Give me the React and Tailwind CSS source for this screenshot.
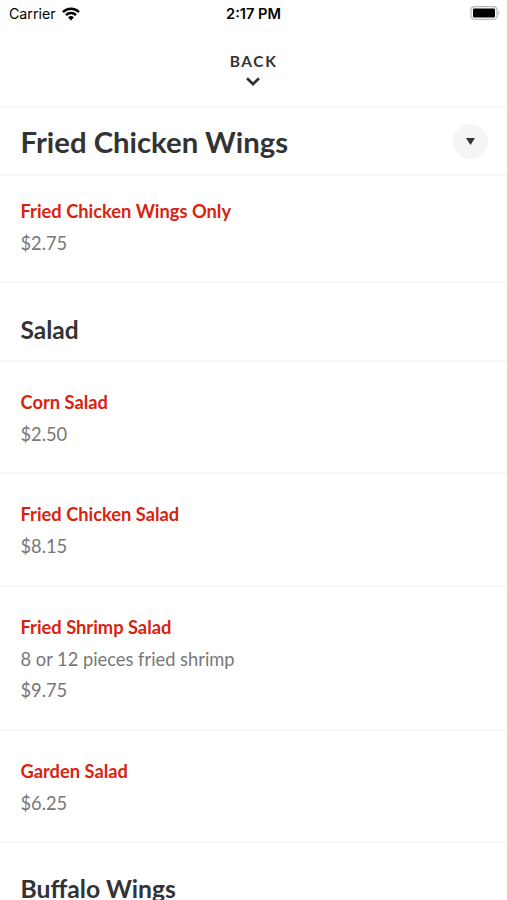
const salads = [
  { name: 'Corn Salad', price: '$2.50', height: 'h-[112px]' },
  { name: 'Fried Chicken Salad', price: '$8.15', height: 'h-[113px]' },
  { name: 'Fried Shrimp Salad', description: '8 or 12 pieces fried shrimp', price: '$9.75', height: 'h-[144px]' },
  { name: 'Garden Salad', price: '$6.25', height: 'h-[112px]' },
];

function StatusBar() {
  return (
    <div className="grid h-7 grid-cols-3 items-center pl-[9px] pr-[7px] font-['Inter','Liberation_Sans',sans-serif] text-black">
      <div className="flex items-center gap-[6px]">
        <span className="text-[14.2px] leading-7">Carrier</span>
        <svg width="18" height="14" viewBox="0 0 18 14" fill="none" stroke="currentColor" strokeWidth="2.5">
          <path d="M1 5.1a11.4 11.4 0 0 1 16 0" />
          <path d="M4 8.1a7.1 7.1 0 0 1 10 0" />
          <path d="M9 13.4 6.1 10.5a4.1 4.1 0 0 1 5.8 0Z" fill="currentColor" stroke="none" />
        </svg>
      </div>
      <span className="-ml-[2px] text-center text-[14.6px] leading-7 font-semibold">2:17 PM</span>
      <svg className="mb-[2px] justify-self-end" width="30" height="14" viewBox="0 0 30 14">
        <rect x="1" y="0.7" width="26" height="12.6" rx="3.5" fill="none" stroke="#b8b8b8" strokeWidth="1.2" />
        <rect x="3" y="2.6" width="22" height="8.8" rx="1.2" fill="black" />
        <path d="M28.3 4.8v4.4c1.6-.6 1.6-3.8 0-4.4Z" fill="#b8b8b8" />
      </svg>
    </div>
  );
}

function MenuItem({ item }) {
  return (
    <li className={`${item.height} border-b-2 border-[#f7f7f7] px-[20.5px] pt-[25px] text-[18.3px] leading-[31.6px]`}>
      <h3 className="font-bold text-[#d8230f]">{item.name}</h3>
      {item.description && <p className="text-[#777]">{item.description}</p>}
      <p className="text-[#777]">{item.price}</p>
    </li>
  );
}

export default function App() {
  return (
    <div className="h-[900px] w-full overflow-hidden bg-white font-['Lato',sans-serif] text-[#333]">
      <StatusBar />

      <header className="flex h-20 flex-col items-center border-b-2 border-[#f7f7f7] pt-[23px]">
        <button className="mr-[2px] flex flex-col items-center">
          <span className="pl-[2px] text-[15.5px] leading-5 font-bold tracking-[1.6px]">BACK</span>
          <svg className="mt-[6px]" width="14" height="9" viewBox="0 0 14 9" fill="none" stroke="currentColor" strokeWidth="2.7">
            <path d="m1 1.2 6 5.8 6-5.8" />
          </svg>
        </button>
      </header>

      <div className="flex h-[68px] items-center justify-between border-b-2 border-[#f7f7f7] pr-[19px] pl-[20.5px]">
        <h1 className="pt-[2px] text-[29.3px] leading-9 font-bold">Fried Chicken Wings</h1>
        <button className="flex size-[35px] items-center justify-center rounded-full bg-[#f5f5f5]" aria-label="Sections">
          <svg width="9" height="7" viewBox="0 0 9 7" fill="currentColor">
            <path d="M0 0h9L4.5 7Z" />
          </svg>
        </button>
      </div>

      <div className="h-[107px] border-b-2 border-[#f7f7f7] px-[20.5px] pt-5 text-[18.3px] leading-[31.8px]">
        <h3 className="font-bold text-[#d8230f]">Fried Chicken Wings Only</h3>
        <p className="text-[#777]">$2.75</p>
      </div>

      <h2 className="h-[79px] border-b-2 border-[#f7f7f7] px-[20.5px] pt-[31px] text-[24.5px] leading-8 font-bold">Salad</h2>
      <ul>
        {salads.map(item => (
          <MenuItem key={item.name} item={item} />
        ))}
      </ul>
      <h2 className="px-[20.5px] pt-[30px] text-[24.7px] leading-8 font-bold">Buffalo Wings</h2>
    </div>
  );
}
